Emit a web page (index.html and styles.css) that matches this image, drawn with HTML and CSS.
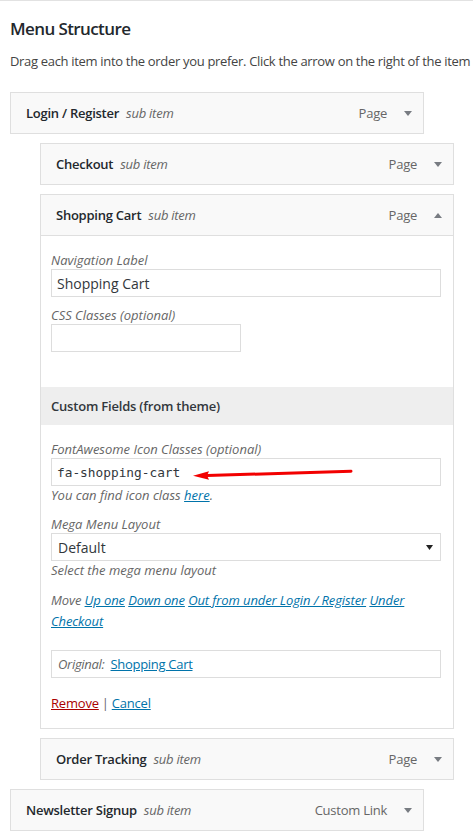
FILE: index.html
```html
<!DOCTYPE html>
<html lang="en">
<head>
<meta charset="utf-8">
<title>Menu Structure</title>
<link rel="stylesheet" href="styles.css">
</head>
<body>
<div class="page">
  <h3 class="heading">Menu Structure</h3>
  <p class="intro">Drag each item into the order you prefer. Click the arrow on the right of the item</p>

  <ul class="menu">
    <li class="menu-item">
      <div class="item-bar">
        <span class="item-title">Login / Register</span><span class="item-sub">sub item</span>
        <span class="item-type">Page</span>
        <svg class="item-arrow" width="8" height="5" viewBox="0 0 8 5"><path d="M0 0H8L4 5Z" fill="#787c82"/></svg>
      </div>
    </li>

    <li class="menu-item depth-1">
      <div class="item-bar">
        <span class="item-title">Checkout</span><span class="item-sub">sub item</span>
        <span class="item-type">Page</span>
        <svg class="item-arrow" width="8" height="5" viewBox="0 0 8 5"><path d="M0 0H8L4 5Z" fill="#787c82"/></svg>
      </div>
    </li>

    <li class="menu-item depth-1 open">
      <div class="item-bar">
        <span class="item-title">Shopping Cart</span><span class="item-sub">sub item</span>
        <span class="item-type">Page</span>
        <svg class="item-arrow" width="8" height="5" viewBox="0 0 8 5"><path d="M0 5H8L4 0Z" fill="#787c82"/></svg>
      </div>
      <div class="settings">
        <div class="field">
          <label class="field-label">Navigation Label</label>
          <div class="input wide">Shopping Cart</div>
        </div>
        <div class="field">
          <label class="field-label">CSS Classes (optional)</label>
          <div class="input narrow"></div>
        </div>

        <div class="custom-head">Custom Fields (from theme)</div>

        <div class="field field-fa">
          <label class="field-label">FontAwesome Icon Classes (optional)</label>
          <div class="input wide mono">fa-shopping-cart
            <svg class="annot" width="320" height="28" viewBox="0 0 320 28"><path d="M156 17.6 L300 13.2" stroke="#f20000" stroke-width="3" stroke-linecap="round" fill="none"/><path d="M142 17.8 L158 13.2 L156 17.6 L158 21.8 Z" fill="#f20000"/></svg>
          </div>
          <p class="field-desc">You can find icon class <a href="#" class="link">here</a>.</p>
        </div>

        <div class="field">
          <label class="field-label">Mega Menu Layout</label>
          <div class="input wide select"><span>Default</span><svg width="7" height="5" viewBox="0 0 7 5"><path d="M0 0H7L3.5 5Z" fill="#222"/></svg></div>
          <p class="field-desc">Select the mega menu layout</p>
        </div>

        <p class="move">Move <a href="#" class="link">Up one</a> <a href="#" class="link">Down one</a> <a href="#" class="link">Out from under Login / Register</a> <a href="#" class="link">Under</a> <a href="#" class="link">Checkout</a></p>

        <div class="original"><span class="orig-label">Original:</span><a href="#" class="link">Shopping Cart</a></div>

        <div class="actions"><a href="#" class="remove">Remove</a><span class="sep">|</span><a href="#" class="link">Cancel</a></div>
      </div>
    </li>

    <li class="menu-item depth-1">
      <div class="item-bar">
        <span class="item-title">Order Tracking</span><span class="item-sub">sub item</span>
        <span class="item-type">Page</span>
        <svg class="item-arrow" width="8" height="5" viewBox="0 0 8 5"><path d="M0 0H8L4 5Z" fill="#787c82"/></svg>
      </div>
    </li>

    <li class="menu-item">
      <div class="item-bar">
        <span class="item-title">Newsletter Signup</span><span class="item-sub">sub item</span>
        <span class="item-type">Custom Link</span>
        <svg class="item-arrow" width="8" height="5" viewBox="0 0 8 5"><path d="M0 0H8L4 5Z" fill="#787c82"/></svg>
      </div>
    </li>
  </ul>
</div>
</body>
</html>
```

FILE: styles.css
```css
* { box-sizing: border-box; }

html, body {
  margin: 0;
  padding: 0;
  background: #fff;
}

body {
  font-family: "Open Sans", "Noto Sans", sans-serif;
  font-size: 13px;
  color: #23282d;
  overflow: hidden;
  border-top: 1px solid #e2e2e2;
}

.page {
  padding: 0 0 0 10px;
  width: 473px;
  overflow: hidden;
}

.heading {
  margin: 17px 0 0;
  font-size: 17px;
  line-height: 22px;
  font-weight: 600;
  color: #23282d;
  letter-spacing: -0.6px;
}

.intro {
  margin: 11px 0 0;
  line-height: 20px;
  white-space: nowrap;
  color: #444;
  letter-spacing: -0.32px;
}

.menu {
  list-style: none;
  margin: 21px 0 0;
  padding: 0;
}

.menu-item {
  width: 414px;
  margin: 0 0 9px;
}

.menu-item.depth-1 {
  margin-left: 30px;
}

.item-bar {
  display: flex;
  align-items: center;
  height: 42px;
  padding: 0 11px 0 15px;
  border: 1px solid #dfdfdf;
  background: #f9f9f9;
  letter-spacing: -0.25px;
}

.item-title {
  font-weight: 600;
  color: #23282d;
}

.item-sub {
  margin-left: 7px;
  font-style: italic;
  color: #666;
}

.item-type {
  margin-left: auto;
  color: #666;
}

.item-arrow {
  margin-left: 17px;
  flex: none;
}

.settings {
  border: 1px solid #dfdfdf;
  border-top: none;
  background: #fff;
  padding: 15px 10px 16px;
}

.field {
  margin-bottom: 9px;
}

.field-label,
.field-desc {
  display: block;
  margin: 0;
  line-height: 18px;
  font-style: italic;
  color: #666;
}

.input {
  position: relative;
  display: flex;
  align-items: center;
  height: 28px;
  padding: 0 6px 0 5px;
  border: 1px solid #ddd;
  background: #fff;
  font-size: 14px;
  color: #32373c;
}

.input.wide { width: 390px; }
.input.narrow { width: 190px; }

.input.mono {
  font-family: "DejaVu Sans Mono", "Liberation Mono", monospace;
  font-size: 12.8px;
}

.input.select {
  justify-content: space-between;
  padding: 0 7px 0 6px;
}

.annot {
  position: absolute;
  left: -1px;
  top: -1px;
}

.custom-head {
  margin: 35px -10px 15px;
  height: 38px;
  display: flex;
  align-items: center;
  padding: 0 10px;
  background: #eee;
  font-weight: 600;
  color: #32373c;
  letter-spacing: -0.2px;
}

.field-fa { margin-bottom: 11px; }

.link {
  color: #0073aa;
  text-decoration: underline;
}

.move {
  margin: 11px 0 0;
  width: 390px;
  line-height: 21px;
  font-style: italic;
  color: #666;
  letter-spacing: -0.1px;
}

.original {
  display: flex;
  align-items: center;
  gap: 6px;
  width: 390px;
  height: 28px;
  margin-top: 18px;
  padding: 0 6px;
  border: 1px solid #ddd;
  letter-spacing: -0.3px;
}

.orig-label {
  font-style: italic;
  color: #666;
}

.actions {
  display: flex;
  align-items: center;
  gap: 3px;
  margin-top: 16px;
  line-height: 18px;
  color: #666;
  letter-spacing: -0.2px;
}

.remove {
  color: #a00;
  text-decoration: underline;
}

.sep { color: #666; }
```
